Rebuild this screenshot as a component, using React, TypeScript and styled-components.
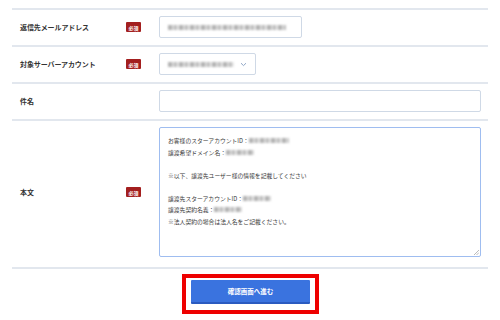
import React from "react";
import styled, { createGlobalStyle } from "styled-components";

const Global = createGlobalStyle`
  html, body { margin: 0; padding: 0; background: #ffffff; }
  body { font-family: "Noto Sans CJK JP", "Noto Sans", sans-serif; }
`;

const Page = styled.div`
  width: 500px;
  height: 320px;
  padding: 8px 12px 0 12px;
  box-sizing: border-box;
  overflow: hidden;
`;

const Table = styled.div`
  width: 476px;
  border-top: 2px solid #e2e7ee;
`;

const Row = styled.div<{ $tall?: boolean }>`
  display: grid;
  grid-template-columns: 88px 15px 1fr;
  column-gap: 18px;
  align-items: center;
  padding: 6px 7px ${(p) => (p.$tall ? "10px" : "7px")} 8px;
  border-bottom: 2px solid #e2e7ee;
`;

const Label = styled.div`
  font-size: 7px;
  font-weight: 700;
  color: #333;
  letter-spacing: -0.1px;
  white-space: nowrap;
`;

const Badge = styled.span`
  display: flex;
  align-items: center;
  justify-content: center;
  width: 15px;
  height: 10px;
  background: #a31f1f;
  color: #fff;
  font-size: 5px;
  font-weight: 700;
  border-radius: 1px;
`;

const Field = styled.div<{ $width?: number }>`
  box-sizing: border-box;
  height: 22px;
  width: ${(p) => (p.$width ? `${p.$width}px` : "100%")};
  border: 1px solid #cfd9e6;
  border-radius: 2px;
  display: flex;
  align-items: center;
  padding: 0 8px;
  background: #fff;
`;

const Blur = styled.span<{ $w: number }>`
  display: inline-block;
  width: ${(p) => p.$w}px;
  height: 5px;
  filter: blur(1.3px);
  background: repeating-linear-gradient(90deg, #9a9a9a 0 4px, #cccccc 4px 6px, #ababab 6px 9px, #e0e0e0 9px 11px);
  opacity: 0.75;
  vertical-align: middle;
`;

const Chevron = styled.svg`
  margin-left: auto;
  width: 7px;
  height: 5px;
`;

const TextArea = styled.div`
  position: relative;
  box-sizing: border-box;
  height: 130px;
  border: 1px solid #9fbdf0;
  border-radius: 2px;
  padding: 7px 8px;
  font-size: 5.8px;
  line-height: 11.5px;
  color: #3a3a3a;
  white-space: pre;
`;

const Line = styled.div`
  height: 11.5px;
  display: flex;
  align-items: center;
`;

const Grip = styled.svg`
  position: absolute;
  right: 1px;
  bottom: 1px;
  width: 5px;
  height: 5px;
`;

const ButtonArea = styled.div`
  padding: 5px 0 0 170px;
`;

const Highlight = styled.div`
  display: inline-block;
  border: 4px solid #ee0000;
  padding: 2px 5px 6px 5px;
`;

const SubmitButton = styled.button`
  display: block;
  width: 119px;
  height: 24px;
  border: none;
  border-bottom: 2px solid #2a5bc0;
  border-radius: 1px;
  background: #3a73df;
  color: #fff;
  font-family: "Noto Sans CJK JP", sans-serif;
  font-size: 6.5px;
  font-weight: 700;
  padding: 0;
`;

const lines: Array<[string, number] | null> = [
  ["お客様のスターアカウントID：", 40],
  ["譲渡希望ドメイン名：", 28],
  null,
  ["※以下、譲渡先ユーザー様の情報を記載してください", 0],
  null,
  ["譲渡先スターアカウントID：", 28],
  ["譲渡先契約名義：", 28],
  ["※法人契約の場合は法人名をご記載ください。", 0],
];

export default function App() {
  return (
    <Page>
      <Global />
      <Table>
        <Row>
          <Label>返信先メールアドレス</Label>
          <Badge>必須</Badge>
          <Field $width={143}>
            <Blur $w={118} />
          </Field>
        </Row>
        <Row>
          <Label>対象サーバーアカウント</Label>
          <Badge>必須</Badge>
          <Field $width={97}>
            <Blur $w={66} />
            <Chevron viewBox="0 0 7 5">
              <path d="M1 1.2 L3.5 3.6 L6 1.2" fill="none" stroke="#8fa6c6" strokeWidth="1" />
            </Chevron>
          </Field>
        </Row>
        <Row>
          <Label>件名</Label>
          <span />
          <Field />
        </Row>
        <Row $tall>
          <Label>本文</Label>
          <Badge>必須</Badge>
          <TextArea>
            {lines.map((l, i) =>
              l ? (
                <Line key={i}>
                  {l[0]}
                  {l[1] > 0 && <Blur $w={l[1]} />}
                </Line>
              ) : (
                <Line key={i} />
              )
            )}
            <Grip viewBox="0 0 5 5">
              <path d="M5 0 L0 5 M5 2.5 L2.5 5" stroke="#aaa" strokeWidth="0.8" />
            </Grip>
          </TextArea>
        </Row>
      </Table>
      <ButtonArea>
        <Highlight>
          <SubmitButton>確認画面へ進む</SubmitButton>
        </Highlight>
      </ButtonArea>
    </Page>
  );
}
